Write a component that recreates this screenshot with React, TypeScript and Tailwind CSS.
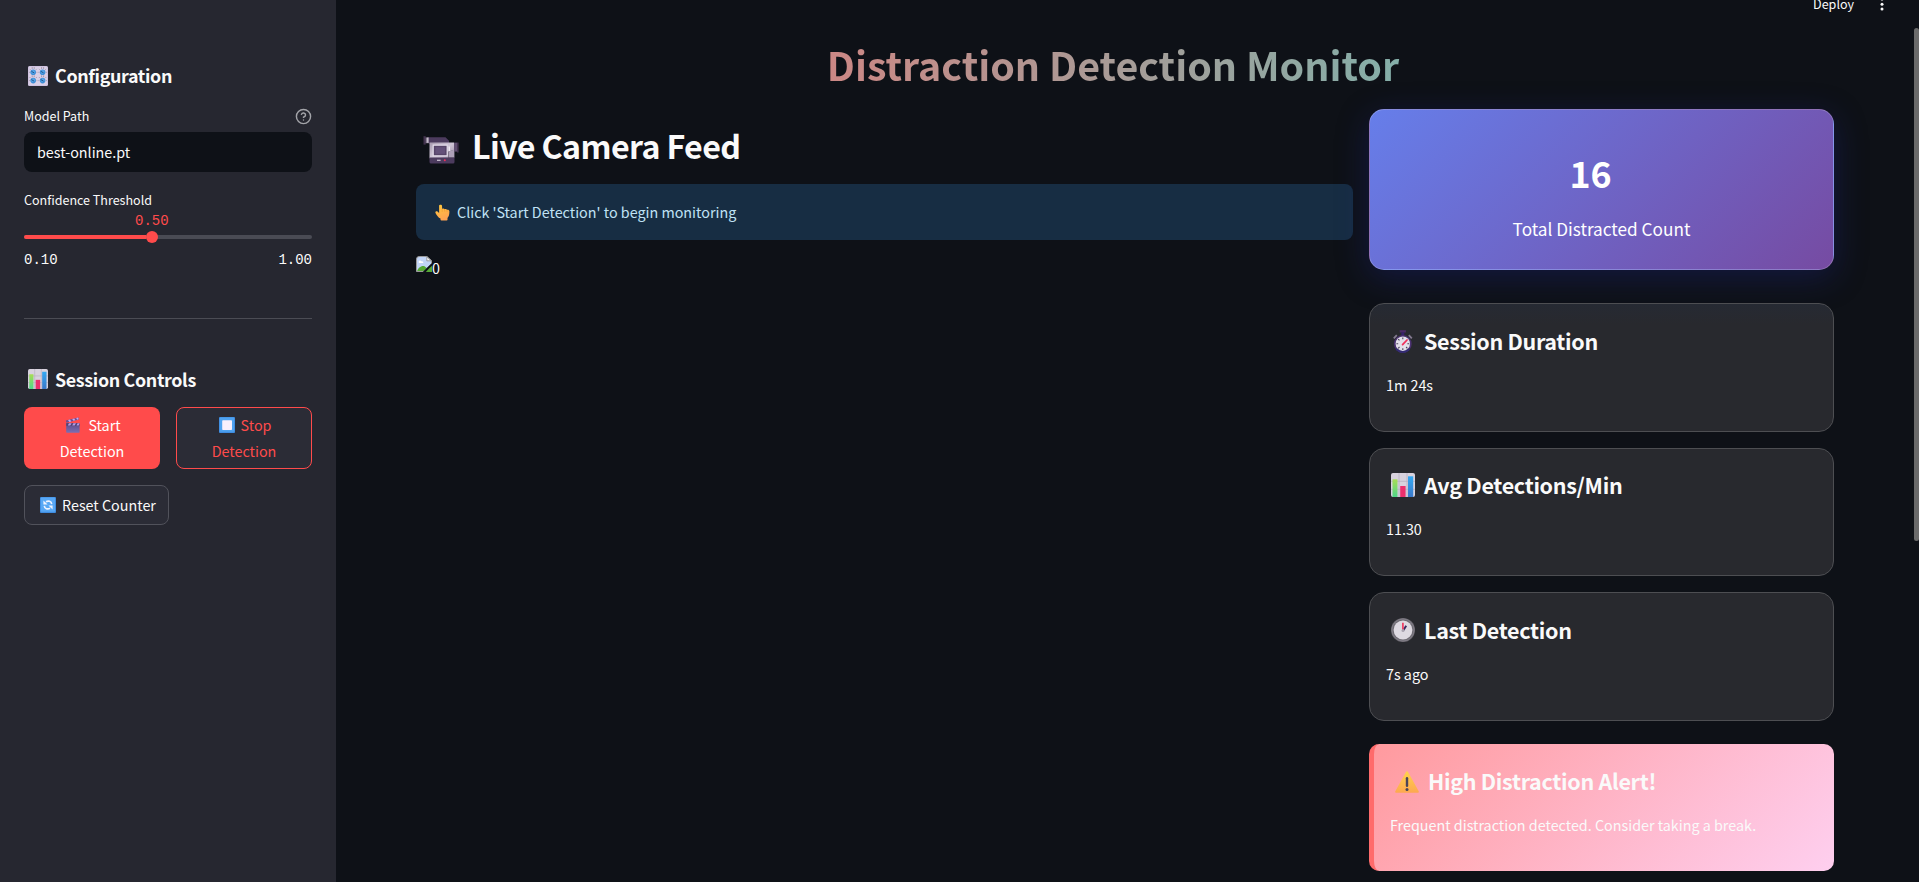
import type { ReactNode } from "react";
import { clsx } from "clsx";

type IconProps = { className?: string };

function KnobsIcon({ className }: IconProps) {
  const knobs = [[5.2, 6.3], [14.6, 6.3], [5.2, 14.6], [14.6, 14.6]];
  return (
    <svg viewBox="0 0 20 20" className={className}>
      <rect width="20" height="20" rx="1.6" fill="#d9cfe6" />
      <rect x="0.5" y="0.5" width="19" height="19" rx="1.4" fill="none" stroke="#c7b9da" strokeWidth="0.6" />
      {knobs.map(([x, y]) => (
        <g key={`${x}-${y}`}>
          <path d={`M${x - 2.8} ${y - 2.6}l-.7-.8M${x - 1} ${y - 3.4}v-1.8M${x + 1} ${y - 3.4}v-1.8M${x + 2.8} ${y - 2.6}l.7-.8M${x - 3.4} ${y}h-.8M${x + 3.4} ${y}h.8`} stroke="#8b8296" strokeWidth="0.7" />
          <circle cx={x} cy={y} r="2.8" fill="#3f8fd8" />
          <circle cx={x} cy={y - 0.4} r="1.9" fill="#55a4e6" />
          <path d={`M${x - 1.8} ${y - 1}L${x + 1} ${y + 0.6}`} stroke="#20588f" strokeWidth="1" />
        </g>
      ))}
    </svg>
  );
}

function ChartIcon({ className }: IconProps) {
  return (
    <svg viewBox="0 0 24 24" className={className}>
      <defs>
        <linearGradient id="barGreen" x1="0" y1="0" x2="0" y2="1">
          <stop offset="0" stopColor="#a8dc55" />
          <stop offset="1" stopColor="#4fd889" />
        </linearGradient>
        <linearGradient id="barBlue" x1="0" y1="0" x2="0" y2="1">
          <stop offset="0" stopColor="#33a9f3" />
          <stop offset="1" stopColor="#3b78c9" />
        </linearGradient>
      </defs>
      <rect width="24" height="24" rx="2" fill="#d8d2de" />
      <path d="M8 0v24M16 0v24M0 8.3h24M0 16.3h24" stroke="#b9b0c2" strokeWidth="0.8" />
      <path d="M1.5 24V6.3h5V24z" fill="url(#barGreen)" />
      <path d="M9.2 24V13h5.4v11z" fill="#ec2f6d" />
      <path d="M17 24V3.3h5.2V24z" fill="url(#barBlue)" />
    </svg>
  );
}

function ClapperIcon({ className }: IconProps) {
  return (
    <svg viewBox="0 0 16 16" className={className}>
      <defs>
        <linearGradient id="clapBody" x1="0" y1="0" x2="0" y2="1">
          <stop offset="0" stopColor="#5b4a86" />
          <stop offset="1" stopColor="#7c6fb4" />
        </linearGradient>
      </defs>
      <path d="M1.2 6.2H14.6V15a.8.8 0 0 1-.8.8H2a.8.8 0 0 1-.8-.8z" fill="url(#clapBody)" />
      <path d="M.8 3.6L13.6.4l.5 2L1.4 5.8z" fill="#6a4f92" />
      <path d="M3 3.1l2-.5 1.3 1.8-2 .5zM7.2 2.1l2-.5 1.2 1.7-2 .5zM11.2 1l1.9-.4.6 1.7-1.6.5z" fill="#c9a7ee" />
      <path d="M1.4 6.2h13v2.6h-13z" fill="#4f4372" />
      <path d="M4 6.2h2.6L5.2 8.5H2.8zM8.4 6.2H11L9.7 8.5H7.2zM12.6 6.2h2l-.9 2.3h-2.2z" fill="#b79be6" />
    </svg>
  );
}

function StopIcon({ className }: IconProps) {
  return (
    <svg viewBox="0 0 16 16" className={className}>
      <rect width="16" height="16" rx="1" fill="#3f8ce0" />
      <rect x="0.8" y="0.6" width="14.2" height="14.2" rx="0.8" fill="#4fa2f0" />
      <rect x="3.2" y="3.2" width="9.8" height="9.8" rx="0.8" fill="#f9effc" />
    </svg>
  );
}

function ResetIcon({ className }: IconProps) {
  return (
    <svg viewBox="0 0 16 16" className={className}>
      <rect width="16" height="16" rx="1" fill="#3f8ce0" />
      <rect x="0.8" y="0.6" width="14.2" height="14.2" rx="0.8" fill="#58a8f5" />
      <path d="M6 4.700C8.300 3.400 11.400 4.200 11.700 7.200M10 11.300C7.700 12.600 4.600 11.800 4.300 8.800" fill="none" stroke="#eef3ff" strokeWidth="1.600" />
      <path d="M3.400 3.400v4.200h4.200zM12.600 12.600V8.400H8.400z" fill="#eef3ff" />
    </svg>
  );
}

function CameraIcon({ className }: IconProps) {
  return (
    <svg viewBox="0 0 36 30" className={className}>
      <defs>
        <linearGradient id="camBody" x1="0" y1="0" x2="1" y2="1">
          <stop offset="0" stopColor="#a89bb0" />
          <stop offset="0.5" stopColor="#cfc6d6" />
          <stop offset="1" stopColor="#9a8ba6" />
        </linearGradient>
      </defs>
      <path d="M4 2.200h18.500l3.500 3.500v3H6V6.500H4z" fill="#4c3b5e" />
      <path d="M.5 1.200h2.200v8.400H.5z" fill="#43334f" />
      <path d="M2.700 2.400h3.300v5.800H2.700z" fill="#8d8096" />
      <path d="M4 2.800h1.200v5H4z" fill="#c5bccb" />
      <path d="M6.500 7.600H31V15l-5.600 1.800v6.400H6.500z" fill="url(#camBody)" />
      <path d="M25.500 16.500l5.900-2v8.300h-5.900z" fill="#ada0b8" />
      <path d="M10.200 10.200h14v10.600h-14z" fill="#574569" stroke="#e3dcea" strokeWidth="1.200" />
      <path d="M12.400 12.200h9.600v6.600h-9.600z" fill="#64517a" />
      <path d="M25.500 11.500h1.500v4.500h-1.500z" fill="#eee8f2" />
      <path d="M31 7.600h3v9h-3z" fill="#5f4e6f" />
      <path d="M34 7.600h1.600v9.800H34z" fill="#43334f" />
      <path d="M6.500 22.500h25V27a1.500 1.500 0 0 1-1.500 1.500H8A1.500 1.500 0 0 1 6.500 27z" fill="#4c3b5e" />
      <path d="M14 25.300h3.600" stroke="#cfc6d6" strokeWidth="1.200" />
      <circle cx="21.800" cy="25.300" r="1" fill="#f0315c" />
    </svg>
  );
}

function PointUpIcon({ className }: IconProps) {
  return (
    <svg viewBox="0 0 15 17" className={className}>
      <defs>
        <linearGradient id="hand" x1="0" y1="0" x2="0.400" y2="1">
          <stop offset="0" stopColor="#ffc93a" />
          <stop offset="1" stopColor="#ffa352" />
        </linearGradient>
      </defs>
      <path d="M4.100 1.600C4.100.5 6.900.3 7 1.700L7.200 5c.8-.6 2-.5 2.500.3.900-.5 1.900-.3 2.300.5 1.100-.3 2.400.2 2.400 1.600 0 3.400-.6 5-1.900 6.600v1.800c0 .5-.3.800-.8.800H6.400c-.5 0-.8-.3-.9-.8v-1.200C3.300 13.600 1.700 11 .5 8.900c-.6-1.200 1-2.200 2-1.300l1.600 1.500z" fill="url(#hand)" />
      <path d="M7.200 5v2.800M9.700 5.400v2.300M12 5.900v1.900" fill="none" stroke="#e8902c" strokeWidth="0.500" />
    </svg>
  );
}

function BrokenImageIcon({ className }: IconProps) {
  return (
    <svg viewBox="0 0 16 16" className={className}>
      <path d="M.5 15.500V3.200A2.700 2.700 0 0 1 3.200.5h7.600l4.700 4.300v3L7.500 15.500z" fill="#c2d5f7" />
      <path d="M1 15.400c1-3.600 4.500-6.200 7.500-5.200l2.500 2-4 3.300z" fill="#55a935" />
      <path d="M2.500 6.300c.2-1.800 2.300-2.300 3-.9 1.400-.3 2.100.900 1.700 1.700H3.300z" fill="#fff" />
      <path d="M10.800.5v4.300h4.700z" fill="#f4f4f4" stroke="#8e8e8e" strokeWidth="0.800" />
      <path d="M.5 15.500V3.200A2.700 2.700 0 0 1 3.200.5h7.600l4.700 4.300v2.400M.5 15.500H7" fill="none" stroke="#9a9a9a" />
      <path d="M16 8.200L7.800 16" stroke="#0e1117" strokeWidth="1.600" />
      <path d="M13.500 12l2.500-2.200V16H9.800z" fill="#55a935" />
    </svg>
  );
}

function StopwatchIcon({ className }: IconProps) {
  return (
    <svg viewBox="0 0 24 24" className={className}>
      <path d="M8.700 1.200h6.200v2.300H8.700z" fill="#4b2a66" />
      <path d="M10.300 3.200h3v3.600h-3z" fill="#37206b" />
      <path d="M2.800 9.400l3-3.200M20.800 9.400l-3-3.200" stroke="#837a90" strokeWidth="1.800" />
      <circle cx="11.800" cy="15" r="8.900" fill="#4a3170" />
      <path d="M4.100 19.400a8.900 8.900 0 0 0 15.400 0z" fill="#322a72" />
      <circle cx="11.800" cy="14.700" r="7.200" fill="#e3dfea" />
      <path d="M11.800 8.400v1.800M11.800 19.200V21M5.400 14.700h1.800M16.400 14.700h1.800M7.200 10.100l1.300 1.300M7.200 19.300l1.300-1.300M16.400 19.300l-1.300-1.300" stroke="#4b4459" strokeWidth="1.100" />
      <path d="M11.600 15.600l4.400-4.600" stroke="#f0315c" strokeWidth="1.800" strokeLinecap="round" />
    </svg>
  );
}

function ClockIcon({ className }: IconProps) {
  return (
    <svg viewBox="0 0 24 24" className={className}>
      <circle cx="12" cy="12" r="12" fill="#6e6b73" />
      <circle cx="12" cy="12" r="11" fill="none" stroke="#85828b" strokeWidth="0.800" />
      <circle cx="12" cy="12" r="9.400" fill="#dedae2" />
      <path d="M12.400 12.200l2.800-4.400" stroke="#3c2c63" strokeWidth="2" />
      <path d="M11.900 12.400V4.800" stroke="#ee3a62" strokeWidth="1.700" />
      <circle cx="12" cy="12.400" r="1.500" fill="#aaa5b2" />
    </svg>
  );
}

function WarningIcon({ className }: IconProps) {
  return (
    <svg viewBox="0 0 24 22" className={className}>
      <defs>
        <linearGradient id="warn" x1="0" y1="0" x2="0" y2="1">
          <stop offset="0" stopColor="#ffd24a" />
          <stop offset="1" stopColor="#fda850" />
        </linearGradient>
      </defs>
      <path d="M11 .9c.4-.8 1.600-.8 2 0l10.700 19.300c.4.800-.1 1.500-1 1.500H1.300c-.9 0-1.400-.7-1-1.500z" fill="url(#warn)" />
      <path d="M12 7.200v7.600" stroke="#4a4458" strokeWidth="2.400" strokeLinecap="round" />
      <circle cx="12" cy="18.600" r="1.500" fill="#4a4458" />
    </svg>
  );
}

function HelpIcon({ className }: IconProps) {
  return (
    <svg viewBox="0 0 24 24" fill="none" stroke="currentColor" strokeWidth="2" strokeLinecap="round" strokeLinejoin="round" className={className}>
      <circle cx="12" cy="12" r="10" />
      <path d="M9.090 9a3 3 0 0 1 5.830 1c0 2-3 3-3 3" />
      <path d="M12 17h.01" />
    </svg>
  );
}

function StatCard({ icon, title, value, className }: { icon: ReactNode; title: string; value: string; className?: string }) {
  return (
    <div className={clsx("h-[128.600px] rounded-[15px] border border-[#4d4e52] pl-4 pt-[20.600px]", className)}>
      <div className="flex h-8 items-center pl-[5px]">
        {icon}
        <h4 className="ml-[9px] whitespace-nowrap text-[21.500px] font-semibold leading-8 tracking-[-0.300px]">{title}</h4>
      </div>
      <p className="mt-4 text-[14.330px] leading-6">{value}</p>
    </div>
  );
}

function Sidebar() {
  return (
    <aside className="h-full w-[336px] shrink-0 bg-[#262730] px-6 pt-[60px]">
      <div className="flex h-[30px] items-center pl-1">
        <KnobsIcon className="mt-0.5 h-5 w-5" />
        <h3 className="ml-[7px] text-[17.900px] font-semibold leading-[30px] tracking-[-0.360px]">Configuration</h3>
      </div>
      <div className="mt-4 flex h-5 items-center justify-between text-[12.530px] leading-5">
        <label>Model Path</label>
        <HelpIcon className="h-[17px] w-[17px] text-[#a3a4a9]" />
      </div>
      <div className="mt-[6px] flex h-10 items-center rounded-lg bg-[#0e1117] px-[13px] text-[14.330px] leading-6">best-online.pt</div>
      <div className="mt-[18px] h-5 text-[12.530px] leading-5">Confidence Threshold</div>
      <div className="mt-[1px] h-5 pl-[111px] font-['Liberation_Mono',monospace] text-sm leading-5 text-[#ff4b4b]">0.50</div>
      <div className="mt-[4px] flex h-1 items-center rounded-full bg-[#4a4b54]">
        <div className="h-1 w-[122px] rounded-l-full bg-[#ff4b4b]" />
        <div className="h-3 w-3 shrink-0 rounded-full bg-[#ff4b4b]" />
      </div>
      <div className="mt-[11px] flex h-5 justify-between font-['Liberation_Mono',monospace] text-sm leading-5">
        <span>0.10</span>
        <span>1.00</span>
      </div>
      <div className="mt-[48px] h-px bg-[#4b4c54]" />
      <div className="mt-[45px] flex h-[30px] items-center pl-1">
        <ChartIcon className="h-5 w-5" />
        <h3 className="ml-[7px] text-[17.900px] font-semibold leading-[30px] tracking-[-0.360px]">Session Controls</h3>
      </div>
      <div className="mt-[13px] flex gap-4 text-center text-[14.330px] leading-[25.600px]">
        <button className="h-[62px] w-[136px] rounded-lg bg-[#ff4b4b] pb-px text-white">
          <span className="flex items-center justify-center pl-[2px]">
            <ClapperIcon className="mr-[7px] h-4 w-4" />
            Start
          </span>
          <span className="block">Detection</span>
        </button>
        <button className="h-[62px] w-[136px] rounded-lg border border-[#ff4b4b] bg-[#2b2c36] pb-px text-[#ff4b4b]">
          <span className="flex items-center justify-center pl-[2px]">
            <StopIcon className="mr-[6px] h-4 w-4" />
            Stop
          </span>
          <span className="block">Detection</span>
        </button>
      </div>
      <button className="mt-4 flex h-10 w-[145px] items-center rounded-lg border border-[#51525b] bg-[#2b2c36] pl-[15px] text-[14.330px] leading-6">
        <ResetIcon className="mr-[6px] h-4 w-4" />
        Reset Counter
      </button>
    </aside>
  );
}

export default function App() {
  return (
    <div className="relative flex h-[882px] w-full overflow-hidden bg-[#0e1117] font-['Noto_Sans_CJK_JP','Noto_Sans',sans-serif] text-[#fafafa]">
      <Sidebar />
      <main className="flex-1 pl-20 pr-[85px] pt-[34px]">
        <h1 className="bg-linear-[90deg,#ff6b6b,#4ecdc4] bg-clip-text pr-[24px] text-center text-[39.400px] font-bold leading-[60px] text-transparent">
          Distraction Detection Monitor
        </h1>
        <div className="mt-[15px] flex gap-4">
          <section className="flex-1 pt-[14px]">
            <div className="flex h-11 items-center pl-[7px]">
              <CameraIcon className="mt-[10px] h-[30px] w-9" />
              <h2 className="ml-[13px] text-[32.200px] font-semibold leading-[44px] tracking-[-0.620px]">Live Camera Feed</h2>
            </div>
            <div className="mt-[17px] flex h-14 items-center rounded-lg bg-[#172d43] pl-[19px] text-[14.330px] leading-6 text-[#c0e2f5]">
              <PointUpIcon className="h-[17px] w-[15px]" />
              <span className="ml-[7px]">Click 'Start Detection' to begin monitoring</span>
            </div>
            <div className="mt-4 flex h-6 text-[14.330px] leading-6">
              <BrokenImageIcon className="h-4 w-4" />
              0
            </div>
          </section>
          <section className="w-[465px]">
            <div className="h-[161px] rounded-[15px] border border-white/20 bg-linear-[135deg,#667eea_0%,#764ba2_100%] pt-[38px] text-center text-white shadow-[0_8px_32px_0_rgba(31,38,135,0.37)]">
              <div className="pr-[22px] text-[35.800px] font-bold leading-[48px]">16</div>
              <div className="mt-[19px] text-[17.200px] leading-7">Total Distracted Count</div>
            </div>
            <div className="relative mt-[33px] flex flex-col gap-4">
              <StatCard
                className="bg-linear-[180deg,#262a33_0px,#28292e_20px]"
                icon={<StopwatchIcon className="h-6 w-6" />}
                title="Session Duration"
                value="1m 24s"
              />
              <StatCard className="bg-[#28292e]" icon={<ChartIcon className="h-6 w-6" />} title="Avg Detections/Min" value="11.30" />
              <StatCard className="bg-[#28292e]" icon={<ClockIcon className="h-6 w-6" />} title="Last Detection" value="7s ago" />
            </div>
            <div className="mt-[23px] h-[127px] rounded-[10px] border-l-[5px] border-[#ff6b6b] bg-linear-[135deg,#ff9a9e_0%,#fecfef_100%] pl-4 pt-[21px]">
              <div className="flex h-8 items-center pl-[5px]">
                <WarningIcon className="mt-[2px] h-[22px] w-6" />
                <h4 className="ml-[9px] text-[21.500px] font-semibold leading-8 tracking-[-0.300px]">High Distraction Alert!</h4>
              </div>
              <p className="mt-4 text-[14.330px] leading-6">Frequent distraction detected. Consider taking a break.</p>
            </div>
          </section>
        </div>
      </main>
      <div className="absolute right-[65px] top-[-3px] text-[12.530px] leading-[14px]">Deploy</div>
      <svg viewBox="0 0 4 14" className="absolute left-[1880px] top-[-3px] h-[14px] w-1" fill="#fafafa">
        <circle cx="2" cy="2" r="1.500" />
        <circle cx="2" cy="7.200" r="1.500" />
        <circle cx="2" cy="12" r="1.500" />
      </svg>
      <div className="absolute right-0 top-7 h-[513px] w-[5px] rounded-sm bg-[#6b6b6b]" />
    </div>
  );
}
